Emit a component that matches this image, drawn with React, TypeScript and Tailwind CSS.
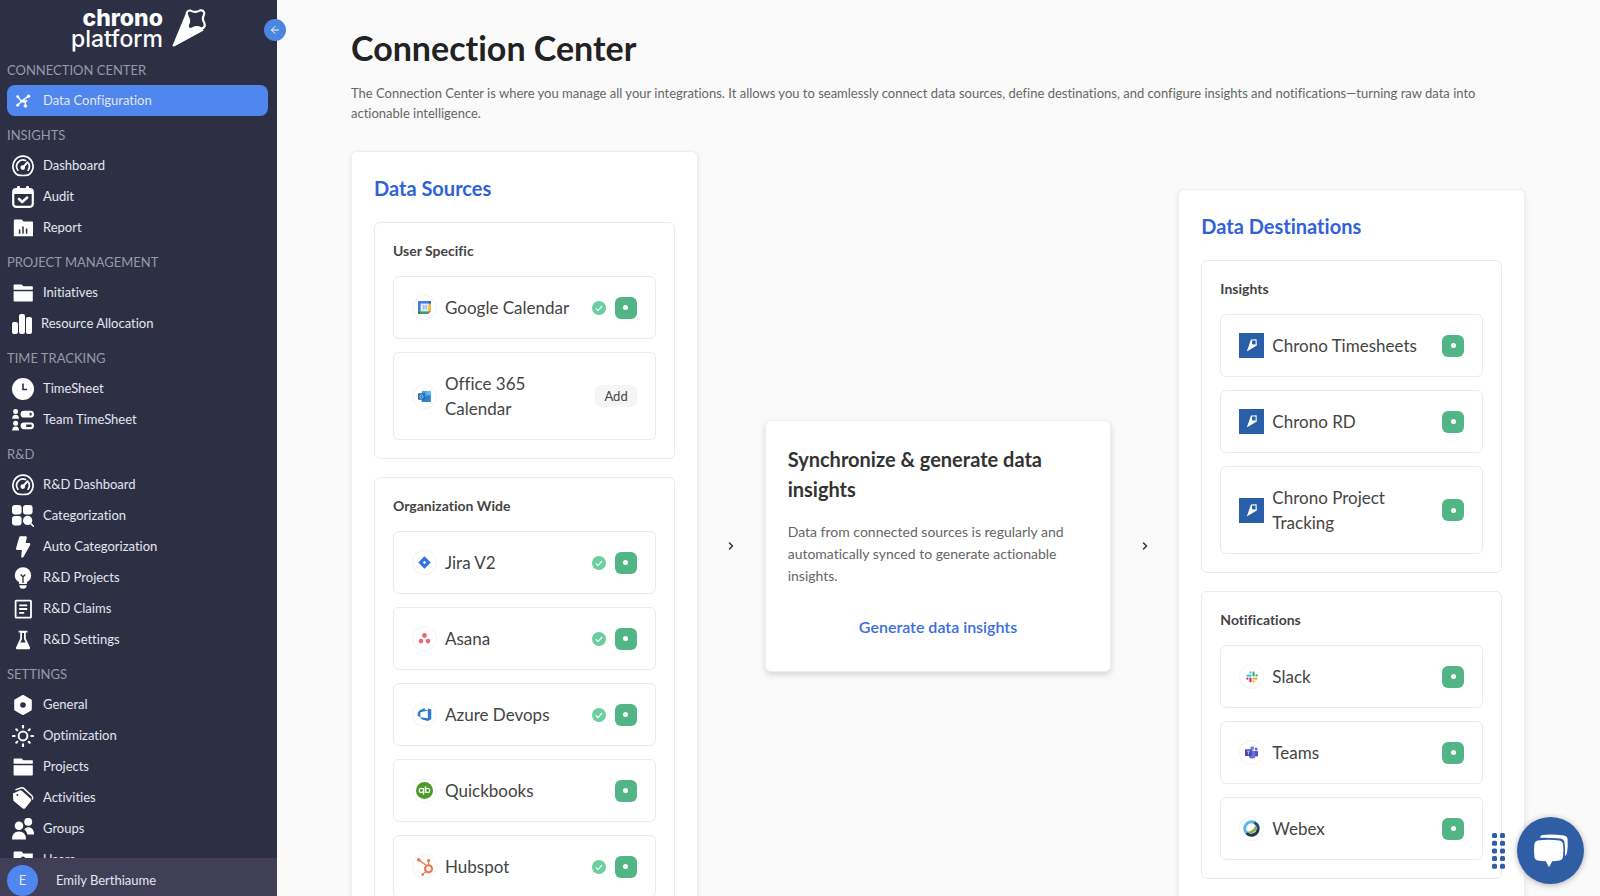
import React from 'react';
import { ArrowLeft, ChevronRight } from 'lucide-react';
import { FaHubspot } from 'react-icons/fa';

type IconProps = { className?: string };

interface NavItem {
  label: string;
  icon: React.ComponentType<IconProps>;
  small?: boolean;
  active?: boolean;
}

interface NavSection {
  title: string;
  items: NavItem[];
}

interface Connection {
  name: string;
  logo: React.ReactNode;
  checked?: boolean;
  pending?: boolean;
}

/* ---------- Sidebar icons ---------- */

const NodesIcon = ({ className }: IconProps) => (
  <svg viewBox="0 0 22 22" className={className} fill="currentColor" stroke="currentColor" strokeLinecap="round">
    <path d="M5.8 6.8 9.5 11.4 16.2 6.4M9.5 11.4 5.8 15M9.5 11.4l3.9 1 0 3.4M10.5 11 15 11" strokeWidth="1.4" fill="none" />
    <circle cx="5.6" cy="6.6" r="1" />
    <circle cx="16.6" cy="6.2" r="1.2" />
    <circle cx="5.6" cy="15.2" r="1.1" />
    <circle cx="13.4" cy="16" r="1.3" />
    <circle cx="9.8" cy="11.2" r=".9" />
  </svg>
);

const GaugeIcon = ({ className }: IconProps) => (
  <svg viewBox="0 0 22 22" className={className} fill="none" stroke="currentColor" strokeWidth="1.7" strokeLinecap="round" strokeLinejoin="round">
    <path d="M6.2 20.2A10.1 10.1 0 1 1 15.8 20.2Q11 20.8 6.2 20.2Z" />
    <path d="M5.9 15.2A6.4 6.4 0 0 1 13.6 5.5M16.6 8.4A6.4 6.4 0 0 1 16.1 15.2" />
    <path d="m11 12.4 4.6-5.2" strokeWidth="2" />
    <circle cx="10.8" cy="12.6" r="1.5" fill="currentColor" />
  </svg>
);

const AuditIcon = ({ className }: IconProps) => (
  <svg viewBox="0 0 22 22" className={className}>
    <rect x="5" y="0" width="3" height="5" rx="1" fill="currentColor" />
    <rect x="14" y="0" width="3" height="5" rx="1" fill="currentColor" />
    <rect x="1.2" y="3.2" width="19.6" height="17.6" rx="3" fill="none" stroke="currentColor" strokeWidth="2.2" />
    <path d="M1 3h20v5H1z" fill="currentColor" />
    <path d="m7 13 3.2 3 5-4.4" fill="none" stroke="currentColor" strokeWidth="2.6" strokeLinecap="round" strokeLinejoin="round" />
  </svg>
);

const ReportIcon = ({ className }: IconProps) => (
  <svg viewBox="0 0 22 22" className={className} fill="currentColor">
    <path d="M2.6 2.6h7l2 2h8.6a.8.8 0 0 1 .8.8v13.8H1.8V3.4z" />
    <path d="M7.6 12.4v4.4M11 9.4v7.4M14.6 11.6v5.2" stroke="#2d3045" strokeWidth="1.5" />
  </svg>
);

const FolderIcon = ({ className }: IconProps) => (
  <svg viewBox="0 0 22 22" className={className} fill="currentColor">
    <path d="M2.4 2.4h7.2l1.8 1.8h9q.4 0 .4.6v3H1.6V3.2q0-.8.8-.8Z" />
    <path d="M1.6 9.2h19.2v9.6q0 .8-.8.8H2.4q-.8 0-.8-.8z" />
  </svg>
);

const BarsIcon = ({ className }: IconProps) => (
  <svg viewBox="0 0 20 20" className={className} fill="currentColor">
    <rect x="0" y="8" width="6" height="12" rx="2" />
    <rect x="7" y="0" width="6" height="20" rx="2" />
    <rect x="14" y="3" width="6" height="17" rx="2" />
  </svg>
);

const ClockIcon = ({ className }: IconProps) => (
  <svg viewBox="0 0 22 22" className={className}>
    <circle cx="11" cy="11" r="11" fill="currentColor" />
    <path d="M11 5.5v6h4" fill="none" stroke="#2d3045" strokeWidth="1.6" />
  </svg>
);

const TeamIcon = ({ className }: IconProps) => (
  <svg viewBox="0 0 22 22" className={className} fill="currentColor">
    <circle cx="3.6" cy="2.6" r="2.5" />
    <path d="M.2 9.8q0-4 3.4-4t3.4 4z" />
    <circle cx="3.6" cy="14.2" r="2.5" />
    <path d="M.2 21.6q0-4 3.4-4t3.4 4z" />
    <rect x="8.6" y="1.8" width="13.4" height="6.8" rx="3.4" />
    <rect x="8.6" y="13.4" width="13.4" height="6.8" rx="3.4" />
    <path d="M17.6 3.8h2v2.8h-2zM14.2 15.6h5.4v2.4h-5.4z" fill="#2d3045" />
  </svg>
);

const CategoryIcon = ({ className }: IconProps) => (
  <svg viewBox="0 0 22 22" className={className} fill="currentColor">
    <rect x="0" y="0" width="9.6" height="9.6" rx="3" />
    <rect x="11" y="0" width="9.6" height="9.6" rx="3" />
    <rect x="0" y="11" width="9.6" height="9.6" rx="3" />
    <circle cx="15.6" cy="15.4" r="4.6" />
    <path d="m18.4 18.2 3 3" stroke="currentColor" strokeWidth="1.6" strokeLinecap="round" />
  </svg>
);

const BoltIcon = ({ className }: IconProps) => (
  <svg viewBox="0 0 22 22" className={className} fill="currentColor" stroke="currentColor" strokeWidth="2.4" strokeLinejoin="round">
    <path d="M8.4 1.5h5.2l-1.5 6.8h5L10.4 20.5l.8-7.8H5.2z" />
  </svg>
);

const BulbIcon = ({ className }: IconProps) => (
  <svg viewBox="0 0 22 22" className={className} fill="currentColor">
    <path d="M11 .2a8.2 8.2 0 0 0-8.2 8.2c0 3 1.6 4.8 3.4 6.2.8.6 1 1.2 1 2.4h7.6c0-1.2.2-1.8 1-2.4 1.8-1.4 3.4-3.2 3.4-6.2A8.2 8.2 0 0 0 11 .2Z" />
    <path d="M7.4 18.2h7.2q0 3.6-3.6 3.6t-3.6-3.6Z" />
    <path d="m8.6 7.6 2.4 2.2 2.4-2.2M11 9.8V16" fill="none" stroke="#2d3045" strokeWidth="1.3" />
  </svg>
);

const DocumentIcon = ({ className }: IconProps) => (
  <svg viewBox="0 0 22 22" className={className} fill="none" stroke="currentColor" strokeWidth="1.8">
    <rect x="3.6" y="2.6" width="15.4" height="17" rx=".6" />
    <path d="M7.2 7.4h8M7.2 11h8M7.2 14.8h5" />
  </svg>
);

const FlaskIcon = ({ className }: IconProps) => (
  <svg viewBox="0 0 22 22" className={className} fill="currentColor">
    <path d="M6.6 1.8h8.8v1.8h-1.6v6l4.2 9q.6 1.6-1 1.6H5q-1.6 0-1-1.6l4.2-9v-6H6.6z" />
    <path d="M10 4h2v6l1.6 3.6H8.4L10 10z" fill="#2d3045" />
  </svg>
);

const HexIcon = ({ className }: IconProps) => (
  <svg viewBox="0 0 22 22" className={className}>
    <path d="m11 2 7.8 4.3v9.4L11 20l-7.8-4.3V6.3z" fill="currentColor" stroke="currentColor" strokeWidth="2" strokeLinejoin="round" />
    <circle cx="11" cy="11" r="2.8" fill="#2d3045" />
  </svg>
);

const SunIcon = ({ className }: IconProps) => (
  <svg viewBox="0 0 22 22" className={className} fill="none" stroke="currentColor" strokeLinecap="round">
    <circle cx="11" cy="11" r="4.4" strokeWidth="2" />
    <path d="M11 1v1.6M11 19.4V21M1 11h1.6M19.4 11H21M4.4 4.4l.8.8M16.8 16.8l.8.8M4.4 17.6l.8-.8M16.8 5.2l.8-.8" strokeWidth="2.2" />
  </svg>
);

const TagIcon = ({ className }: IconProps) => (
  <svg viewBox="0 0 22 22" className={className} fill="currentColor">
    <path d="M1 6.4 7.6 3.4q1.2-.4 2.2.4l8.8 8q1.2 1.2.2 2.4l-5.6 7q-1.2 1-2.4.2L2 14.2q-.8-.6-.8-1.8z" />
    <path d="M4 2.6 9.4.8q1.4-.2 2.4.6l8 7.4q1.4 1.4.6 3.2" fill="none" stroke="currentColor" strokeWidth="1.5" strokeLinecap="round" />
    <circle cx="5.4" cy="8" r="1" fill="#2d3045" />
  </svg>
);

const GroupIcon = ({ className }: IconProps) => (
  <svg viewBox="0 0 22 22" className={className} fill="currentColor">
    <circle cx="7" cy="7.8" r="4.3" />
    <path d="M0 21.6q0-8 7-8t7 8z" />
    <circle cx="16.2" cy="3.8" r="4" />
    <path d="M12.4 11.2q1.6-2 4-2 5.6.4 5.6 7.4h-6.6q-.8-3.2-3-5.4Z" />
  </svg>
);

const UserFolderIcon = ({ className }: IconProps) => (
  <svg viewBox="0 0 22 22" className={className} fill="currentColor">
    <path d="M2.4 2.6h7.2l1.8 1.8h9.4v15.2H1.6V3.4z" />
    <circle cx="11" cy="9.6" r="2.2" fill="#2d3045" />
  </svg>
);

/* ---------- Product logos ---------- */

const ChronoMark = ({ className }: IconProps) => (
  <svg viewBox="0 0 34 40" className={className}>
    <path d="M13.6 6 .6 37.2q-.2 1.8 1.6 1.3L31.6 22.4l-4-6L17 7z" fill="white" />
    <path
      d="M14.8 4.6q1-2.6 3.8-2 3 1.6 5.2 1.3 2.2-.3 4.2-1.5 3-.6 4 1.7.6 1.7-.7 4.3-.9 2.4.2 4.8 1.7 2.9 1.1 5.1-1.1 2.6-3.8 1.9-2.4-1.3-4.7-1-1.9.3-4 1.500-3 .8-4.1-1.3-.7-1.9.7-4.4.9-2.2-.2-4.6-2-3.2-1.7-5.8Z"
      fill="#2d3045"
      stroke="white"
      strokeWidth="2.2"
    />
  </svg>
);

const ChronoTile = () => (
  <span className="flex h-[25px] w-[25px] flex-none items-center justify-center bg-[#285fa8]">
    <svg viewBox="0 0 25 25" className="h-[25px] w-[25px]">
      <path d="m12 6.4 5.6-.2.2 6.2-10 6.2z" fill="white" />
      <path d="m13 7.5 3.6-.1v4.2l-3.6-.3z" fill="#285fa8" />
    </svg>
  </span>
);

const LogoCircle = ({ children }: { children: React.ReactNode }) => (
  <span className="flex h-[25px] w-[25px] flex-none items-center justify-center rounded-full border border-[#f3f3f3]">
    {children}
  </span>
);

const GoogleCalendarLogo = () => (
  <svg viewBox="0 0 14 14" className="h-[13px] w-[13px]">
    <path d="M1 0h10v3H3v8H0V1Q0 0 1 0Z" fill="#3f7ee8" />
    <path d="M11 0h2q1 0 1 1v2h-3z" fill="#2457b8" />
    <path d="M11 3h3v8h-3z" fill="#f5b92e" />
    <path d="M3 11h8v3H3z" fill="#38a056" />
    <path d="M0 11h3v3H1q-1 0-1-1z" fill="#247a3d" />
    <path d="M11 11h3l-3 3z" fill="#e1473a" />
    <path d="M3 3h8v8H3z" fill="#e4ecfa" />
    <path d="M5 5.2q1.8-.8 1.8.5T5.6 6.8Q7 6.9 6.9 8T5 8.6M8 5.6l1-.6v4" fill="none" stroke="#6c98e4" strokeWidth=".8" />
  </svg>
);

const OutlookLogo = () => (
  <svg viewBox="0 0 14 14" className="h-[13px] w-[13px]">
    <rect x="4" y="1" width="9.6" height="12" rx="1" fill="#3f9be6" />
    <path d="M9 1h4.6v4H9z" fill="#5bb8f2" />
    <path d="M4 7.6 13.6 6v6q0 1-1 1H5q-1 0-1-1z" fill="#2d7fd0" />
    <rect x="0" y="3.6" width="7.4" height="7" rx=".8" fill="#2a67b6" />
    <circle cx="3.7" cy="7.1" r="1.7" fill="none" stroke="#c9dcf4" strokeWidth=".9" />
  </svg>
);

const JiraLogo = () => (
  <svg viewBox="0 0 14 14" className="h-[13px] w-[13px]">
    <path d="m7 .4 6.2 6q.6.6 0 1.2L7 13.6.8 7.6q-.6-.6 0-1.2z" fill="#3172ee" />
    <path d="m7 5.2 1.8 1.8L7 8.800 5.2 7z" fill="white" />
  </svg>
);

const AsanaLogo = () => (
  <svg viewBox="0 0 14 14" className="h-[13px] w-[13px]" fill="#e66b70">
    <circle cx="7" cy="3.8" r="2.6" />
    <circle cx="3.2" cy="9.8" r="2.5" />
    <circle cx="10.8" cy="9.8" r="2.5" />
  </svg>
);

const AzureLogo = () => (
  <svg viewBox="0 0 16 16" className="h-[15px] w-[15px]" fill="#2f78d0">
    <path d="M11.4 1.6 15.2 2.4V13l-3.6 1.8-6-1.6-3-2.2 9 1z" />
    <path d="M.8 6 2.4 3.8 8.2 1v1.6l3.6 1.2-8.2 1.8v5L.8 9.6z" />
  </svg>
);

const QuickbooksLogo = () => (
  <svg viewBox="0 0 18 18" className="h-[17px] w-[17px]">
    <circle cx="9" cy="9" r="9" fill="#4c9a2a" />
    <g fill="none" stroke="white" strokeWidth="1.3">
      <circle cx="5.7" cy="9" r="2.2" />
      <path d="M8 6.3v7.2M10 4.4v7.2" />
      <circle cx="12.3" cy="9" r="2.2" />
    </g>
  </svg>
);

const SlackLogo = () => (
  <svg viewBox="0 0 14 14" className="h-3 w-3" strokeWidth="2.6" strokeLinecap="round">
    <path d="M5.2 1.6v.2M1.8 5.4h3.4" stroke="#4cc3ec" />
    <path d="M8.8 2v3.2M12.2 5.2h.2" stroke="#3bb27d" />
    <path d="M8.8 8.8h3.4M8.8 12.2v.2" stroke="#ecb53a" />
    <path d="M5.2 8.8V12M1.6 8.8h.2" stroke="#dd2c60" />
  </svg>
);

const TeamsLogo = () => (
  <svg viewBox="0 0 14 14" className="h-[13px] w-[13px]">
    <circle cx="12" cy="3.2" r="1.5" fill="#5b5fd0" />
    <circle cx="7.8" cy="2.2" r="2" fill="#7479e0" />
    <rect x="10" y="5" width="4" height="6.4" rx="1.4" fill="#4e52c2" />
    <rect x="4.4" y="4.8" width="6.6" height="8.6" rx="2" fill="#6c70dc" />
    <rect x="0" y="3.4" width="7.4" height="7.4" rx=".8" fill="#474bb8" />
    <path d="M2 5.6h3.4M3.7 5.6v3.6" stroke="#c9caf0" strokeWidth=".9" />
  </svg>
);

const WebexLogo = () => (
  <svg viewBox="0 0 18 18" className="h-[17px] w-[17px]" fill="none" strokeWidth="3.2">
    <path d="M16 9A7 7 0 0 1 3.6 13.500" stroke="#1d3c50" />
    <path d="M3.8 13.8A7 7 0 0 1 12.500 3" stroke="#58b4ec" />
    <path d="M12 2.700A7 7 0 0 1 16 9.500" stroke="#1f4c80" />
    <path d="M3.600 12.400Q7 12.600 10 10.400 12.800 8 13.600 5 15.400 9 13 12 8.800 16.200 3.600 12.400Z" fill="#8bb04e" />
  </svg>
);

const chronoTile = <ChronoTile />;

const circled = (logo: React.ReactNode) => <LogoCircle>{logo}</LogoCircle>;

/* ---------- Data ---------- */

const navSections: NavSection[] = [
  { title: 'CONNECTION CENTER', items: [{ label: 'Data Configuration', icon: NodesIcon, active: true }] },
  {
    title: 'INSIGHTS',
    items: [
      { label: 'Dashboard', icon: GaugeIcon },
      { label: 'Audit', icon: AuditIcon },
      { label: 'Report', icon: ReportIcon },
    ],
  },
  {
    title: 'PROJECT MANAGEMENT',
    items: [
      { label: 'Initiatives', icon: FolderIcon },
      { label: 'Resource Allocation', icon: BarsIcon, small: true },
    ],
  },
  {
    title: 'TIME TRACKING',
    items: [
      { label: 'TimeSheet', icon: ClockIcon },
      { label: 'Team TimeSheet', icon: TeamIcon },
    ],
  },
  {
    title: 'R&D',
    items: [
      { label: 'R&D Dashboard', icon: GaugeIcon },
      { label: 'Categorization', icon: CategoryIcon },
      { label: 'Auto Categorization', icon: BoltIcon },
      { label: 'R&D Projects', icon: BulbIcon },
      { label: 'R&D Claims', icon: DocumentIcon },
      { label: 'R&D Settings', icon: FlaskIcon },
    ],
  },
  {
    title: 'SETTINGS',
    items: [
      { label: 'General', icon: HexIcon },
      { label: 'Optimization', icon: SunIcon },
      { label: 'Projects', icon: FolderIcon },
      { label: 'Activities', icon: TagIcon },
      { label: 'Groups', icon: GroupIcon },
      { label: 'Users', icon: UserFolderIcon },
    ],
  },
];

const userSources: Connection[] = [
  { name: 'Google Calendar', logo: circled(<GoogleCalendarLogo />), checked: true },
  { name: 'Office 365 Calendar', logo: circled(<OutlookLogo />), pending: true },
];

const orgSources: Connection[] = [
  { name: 'Jira V2', logo: circled(<JiraLogo />), checked: true },
  { name: 'Asana', logo: circled(<AsanaLogo />), checked: true },
  { name: 'Azure Devops', logo: circled(<AzureLogo />), checked: true },
  { name: 'Quickbooks', logo: circled(<QuickbooksLogo />) },
  { name: 'Hubspot', logo: circled(<FaHubspot className="h-[18px] w-[18px] text-[#f27650]" />), checked: true },
];

const insightTargets: Connection[] = [
  { name: 'Chrono Timesheets', logo: chronoTile },
  { name: 'Chrono RD', logo: chronoTile },
  { name: 'Chrono Project Tracking', logo: chronoTile },
];

const notificationTargets: Connection[] = [
  { name: 'Slack', logo: circled(<SlackLogo />) },
  { name: 'Teams', logo: circled(<TeamsLogo />) },
  { name: 'Webex', logo: circled(<WebexLogo />) },
];

/* ---------- Components ---------- */

function Sidebar() {
  return (
    <aside className="relative flex w-[277px] flex-none flex-col bg-[#2d3045] text-[#e4e6f0]">
      <div className="flex h-[51px] flex-none items-start justify-center gap-[9px] pt-2">
        <div className="text-right font-['Inter','Liberation_Sans',sans-serif] text-[23px] leading-[21px] text-white">
          <div className="font-extrabold">chrono</div>
          <div className="font-medium">platform</div>
        </div>
        <ChronoMark className="h-10 w-[34px]" />
      </div>

      <nav className="min-h-0 flex-1 overflow-hidden px-[7px]">
        {navSections.map((section) => (
          <div key={section.title}>
            <h2 className="mt-1 h-[30px] text-[13px] leading-[30px] text-[#9899a8]">{section.title}</h2>
            {section.items.map(({ label, icon: Icon, small, active }) => (
              <a
                key={label}
                href="#"
                className={`flex h-[31px] items-center gap-[9px] rounded-lg pl-[5px] text-[13px] ${
                  active ? 'mr-[2px] bg-[#5087ee]' : ''
                }`}
              >
                <Icon className={small ? 'h-5 w-5 text-white' : 'h-[22px] w-[22px] text-white'} />
                <span>{label}</span>
              </a>
            ))}
          </div>
        ))}
      </nav>

      <div className="flex flex-none items-center gap-[18px] bg-[#403f57] px-[7px] pt-[7px]">
        <span className="flex h-[31px] w-[31px] items-center justify-center rounded-full bg-[#5087ee] text-[13px]">E</span>
        <span className="text-[13px]">Emily Berthiaume</span>
      </div>

      <button
        type="button"
        aria-label="Collapse sidebar"
        className="absolute top-[19px] -right-[9px] flex h-[22px] w-[22px] items-center justify-center rounded-full bg-[#4a86de] text-white"
      >
        <ArrowLeft className="h-3 w-3" strokeWidth={2} />
      </button>
    </aside>
  );
}

function ConnectionRow({ name, logo, checked, pending }: Connection) {
  return (
    <li className="flex items-center rounded-md border border-[#ebebeb] px-[18px] py-[18px]">
      {logo}
      <span className="mx-2 flex-1 text-[17px] leading-[25px] text-[#444]">{name}</span>
      {checked && (
        <svg viewBox="0 0 14 14" className="mr-[9px] h-[14px] w-[14px] flex-none">
          <circle cx="7" cy="7" r="7" fill="#69cf9f" />
          <path d="m3.8 7.4 2.2 2.2 4.2-4.8" fill="none" stroke="white" strokeWidth="1.2" />
        </svg>
      )}
      {pending ? (
        <button type="button" className="h-[22px] rounded-md bg-[#f5f5f5] px-[9px] text-[13px] leading-[22px] text-[#444]">
          Add
        </button>
      ) : (
        <button
          type="button"
          aria-label={`${name} settings`}
          className="flex h-[22px] w-[22px] flex-none items-center justify-center rounded-md bg-[#52b585]"
        >
          <span className="h-[5px] w-[5px] rounded-full bg-white" />
        </button>
      )}
    </li>
  );
}

function ConnectionGroup({ title, rows }: { title: string; rows: Connection[] }) {
  return (
    <section className="rounded-md border border-[#ebebeb] p-[18px]">
      <h3 className="mb-[15px] text-[14px] leading-5 font-bold text-[#444]">{title}</h3>
      <ul className="flex flex-col gap-[13px]">
        {rows.map((row) => (
          <ConnectionRow key={row.name} {...row} />
        ))}
      </ul>
    </section>
  );
}

function Panel({ title, children }: { title: string; children: React.ReactNode }) {
  return (
    <section className="flex-1 rounded-md border border-[#eeeeee] bg-white px-[22px] py-[23px] shadow-[0_2px_6px_rgba(0,0,0,0.08)]">
      <h2 className="mb-[21px] text-[20px] leading-[26px] font-bold text-[#2f62d9]">{title}</h2>
      <div className="flex flex-col gap-[18px]">{children}</div>
    </section>
  );
}

const FlowArrow = () => (
  <div className="flex w-[67px] flex-none justify-center">
    <ChevronRight className="h-3 w-3 text-[#333]" strokeWidth={3} />
  </div>
);

export default function App() {
  return (
    <div className="flex h-screen overflow-hidden bg-[#fafafa] font-['Lato','Liberation_Sans',sans-serif] [font-variant-ligatures:none]">
      <Sidebar />

      <main className="min-w-0 flex-1 overflow-hidden pt-7 pr-[75px] pl-[74px]">
        <h1 className="text-[34px] leading-10 font-bold text-[#222]">Connection Center</h1>
        <p className="mt-[15px] text-[13px] leading-5 text-[#666]">
          The Connection Center is where you manage all your integrations. It allows you to seamlessly connect data
          sources, define destinations, and configure insights and notifications—turning raw data into actionable
          intelligence.
        </p>

        <div className="mt-7 flex items-center">
          <Panel title="Data Sources">
            <ConnectionGroup title="User Specific" rows={userSources} />
            <ConnectionGroup title="Organization Wide" rows={orgSources} />
          </Panel>

          <FlowArrow />

          <section className="flex-1 rounded-md border border-[#eeeeee] bg-white px-[22px] py-[23px] shadow-[0_3px_6px_rgba(0,0,0,0.14)]">
            <h2 className="text-[20px] leading-[30px] font-bold text-[#333]">Synchronize &amp; generate data insights</h2>
            <p className="mt-[17px] text-[14px] leading-[22px] text-[#666]">
              Data from connected sources is regularly and automatically synced to generate actionable insights.
            </p>
            <button type="button" className="mt-[19px] h-[42px] w-full text-[16px] font-semibold text-[#3a6de0]">
              Generate data insights
            </button>
          </section>

          <FlowArrow />

          <Panel title="Data Destinations">
            <ConnectionGroup title="Insights" rows={insightTargets} />
            <ConnectionGroup title="Notifications" rows={notificationTargets} />
          </Panel>
        </div>
      </main>

      {/* Floating chat launcher with its drag handle */}
      <div className="fixed right-4 bottom-3 flex items-center gap-3">
        <svg viewBox="0 0 13 36" className="h-9 w-[13px]" fill="#2f5ea4">
          {[0, 1, 2, 3, 4].map((row) => (
            <g key={row}>
              <rect x="0" y={row * 7.7} width="5" height="5" rx="1.5" />
              <rect x="8" y={row * 7.7} width="5" height="5" rx="1.5" />
            </g>
          ))}
        </svg>
        <button
          type="button"
          aria-label="Open chat"
          className="flex h-[67px] w-[67px] items-center justify-center rounded-full bg-[#2f5ea4] shadow-[0_1px_6px_rgba(0,0,0,0.3)]"
        >
          <svg viewBox="0 0 36 34" className="h-[34px] w-9" fill="white">
            <path d="M4.6 6.4q11-1.2 22 0 3 .6 3.4 3.4.8 6.6 0 13-.4 3-3.4 3.6-3.8.6-7.4.8L16 33.2 12.8 27.2Q8.4 27 4.8 26.4 1.8 25.8 1.4 22.8q-.8-6.4 0-13Q1.8 7 4.6 6.4Z" />
            <path d="M7.2 3.7Q7.2 1 10 .9q10.6-.8 21 .6 3.2.6 3.6 3.6.6 7-.6 13.6-.6 2.9-2.1 3.2Q32.5 15 31.5 8.5 30.9 5.2 27.6 4.6 17 3.4 7.2 3.7Z" />
          </svg>
        </button>
      </div>
    </div>
  );
}
